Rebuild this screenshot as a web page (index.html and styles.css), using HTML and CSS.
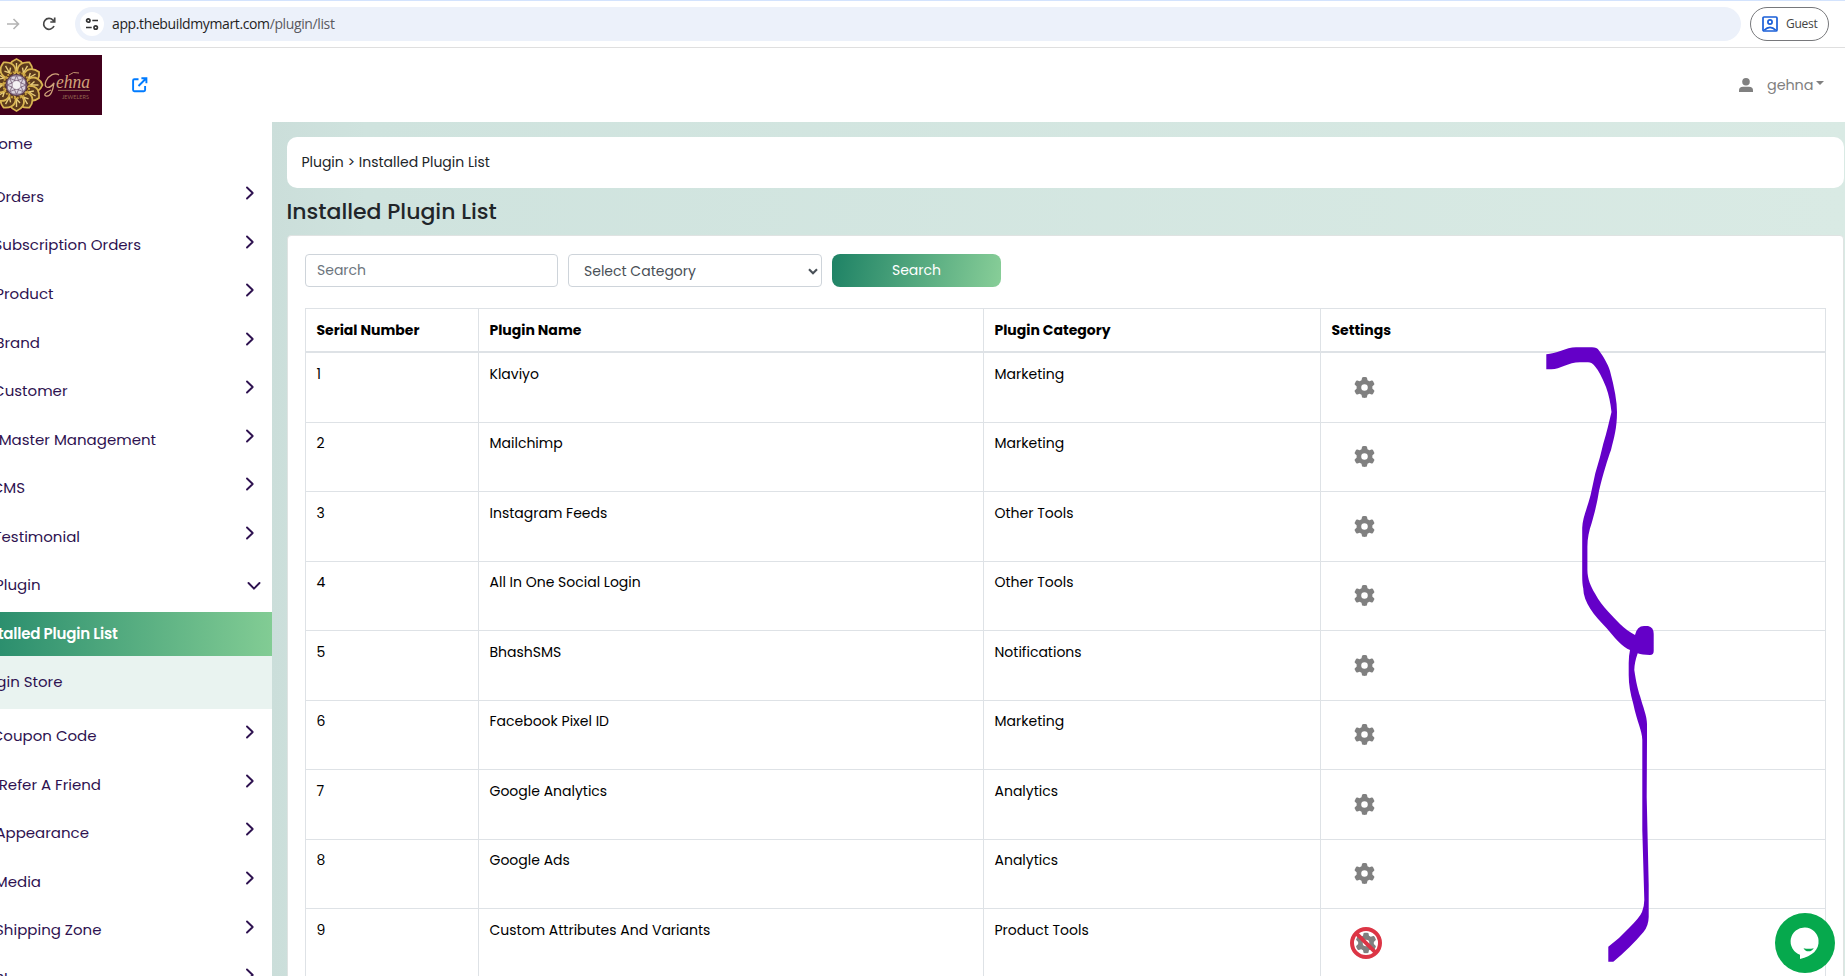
FILE: index.html
```html
<!DOCTYPE html>
<html lang="en">
<head>
<meta charset="utf-8">
<title>Installed Plugin List</title>
<link rel="stylesheet" href="styles.css">
</head>
<body>
<svg width="0" height="0" class="defs">
  <symbol id="chev" viewBox="0 0 10 14"><path d="M2 1.5 7.7 7 2 12.5" fill="none" stroke="#2e1250" stroke-width="1.9" stroke-linecap="round" stroke-linejoin="round"/></symbol>
  <symbol id="gear" viewBox="0 0 512 512"><path fill="#808080" d="M495.9 166.6c3.2 8.7 .5 18.4-6.4 24.6l-43.3 39.4c1.1 8.3 1.7 16.8 1.7 25.4s-.6 17.1-1.7 25.4l43.3 39.4c6.9 6.2 9.6 15.9 6.4 24.6c-4.4 11.9-9.7 23.3-15.8 34.3l-4.7 8.1c-6.6 11-14 21.4-22.1 31.2c-5.9 7.2-15.7 9.6-24.5 6.8l-55.7-17.7c-13.4 10.3-28.2 18.9-44 25.4l-12.5 57.1c-2 9.1-9 16.3-18.2 17.8c-13.8 2.3-28 3.5-42.5 3.5s-28.7-1.2-42.5-3.5c-9.2-1.5-16.2-8.7-18.2-17.8l-12.5-57.1c-15.8-6.5-30.6-15.1-44-25.4L83.1 425.9c-8.8 2.8-18.6 .3-24.5-6.8c-8.1-9.8-15.5-20.2-22.1-31.2l-4.7-8.1c-6.1-11-11.4-22.4-15.8-34.3c-3.2-8.7-.5-18.4 6.4-24.6l43.3-39.4C64.6 273.1 64 264.6 64 256s.6-17.1 1.7-25.4L22.4 191.2c-6.9-6.2-9.6-15.9-6.4-24.6c4.4-11.9 9.7-23.3 15.8-34.3l4.7-8.1c6.6-11 14-21.4 22.1-31.2c5.9-7.2 15.7-9.6 24.5-6.8l55.7 17.7c13.4-10.3 28.2-18.9 44-25.4l12.5-57.1c2-9.1 9-16.3 18.2-17.8C227.3 1.2 241.5 0 256 0s28.7 1.2 42.5 3.5c9.2 1.5 16.2 8.7 18.2 17.8l12.5 57.1c15.8 6.5 30.6 15.1 44 25.4l55.7-17.7c8.8-2.8 18.6-.3 24.5 6.8c8.1 9.8 15.5 20.2 22.1 31.2l4.7 8.1c6.1 11 11.4 22.4 15.8 34.3zM256 336a80 80 0 1 0 0-160 80 80 0 1 0 0 160z"/></symbol>
  <symbol id="petal" viewBox="-30 -30 60 60"><path d="M0-26C5-24 10-19 6-12Q3-9 0-9Q-3-9-6-12C-10-19-5-24 0-26Z" fill="#5c3a1c" stroke="#d9b552" stroke-width="1.8"/><path d="M0-22V-13M-3.5-18 0-14 3.5-18" stroke="#e8cd7a" stroke-width="1.4" fill="none"/></symbol>
</svg>

<div class="toolbar">
  <svg class="forward" width="13" height="12" viewBox="0 0 13 12"><path d="M0 6H11.5M6.5 1 11.5 6 6.5 11" fill="none" stroke="#b4b4b4" stroke-width="1.6"/></svg>
  <svg class="reload" width="14" height="14" viewBox="0 0 14 14"><path d="M12 9A5.4 5.4 0 1 1 11 3.2L12.6 5M12.7.6V5H8.3" fill="none" stroke="#474747" stroke-width="1.7"/></svg>
  <div class="address">
    <span class="site"><svg width="14" height="14" viewBox="0 0 14 14"><g fill="none" stroke="#333" stroke-width="1.7"><circle cx="3.3" cy="3.5" r="1.7"/><path d="M7.3 3.5H13M1 10.5H6.7"/><circle cx="10.7" cy="10.5" r="1.7"/></g></svg></span>
    <span class="url">app.thebuildmymart.com<span class="path">/plugin/list</span></span>
  </div>
  <div class="guest">
    <svg width="16" height="16" viewBox="0 0 16 16"><g fill="none" stroke="#1a5fd8" stroke-width="1.7"><rect x="1" y="1" width="14" height="14" rx="1"/><circle cx="8" cy="6" r="2.1"/><path d="M2.3 14.2Q8 8.6 13.7 14.2"/></g></svg>
    <span>Guest</span>
  </div>
</div>

<header class="header">
  <div class="logo">
    <svg width="102" height="60" viewBox="0 0 102 60">
      <rect width="102" height="60" fill="#42001c"/>
      <g transform="translate(16.5 30)">
        <g id="ring"><use href="#petal" x="-30" y="-30" width="60" height="60"/><use href="#petal" x="-30" y="-30" width="60" height="60" transform="rotate(30)"/><use href="#petal" x="-30" y="-30" width="60" height="60" transform="rotate(60)"/></g>
        <use href="#ring" transform="rotate(90)"/><use href="#ring" transform="rotate(180)"/><use href="#ring" transform="rotate(270)"/>
        <circle r="13" fill="none" stroke="#c79f3c" stroke-width="2" stroke-dasharray="2 1"/>
        <circle r="11" fill="#5b3d52"/><circle r="9.8" fill="#d9d2dc"/>
        <path d="M-4-9 4-9 9-4 9 4 4 9-4 9-9 4-9-4ZM0-9.5 6.7 6.7-9.5 0 6.7-6.7 0 9.5-6.7-6.7 9.5 0-6.7 6.7Z" fill="none" stroke="#776077" stroke-width=".8"/>
        <circle r="4" fill="#f4f1f4"/>
      </g>
      <path d="M58 35.4H90" stroke="#8f6650" stroke-width="1"/>
      <path d="M59 20C55 17 49 20 46 26C43 33 49 35 54 28C53 35 51 42 46 41C43 40 46 37 51 35" fill="none" stroke="#d0a37a" stroke-width="1.3"/>
      <text x="56" y="33" class="logo-name" textLength="34" lengthAdjust="spacingAndGlyphs">ehna</text>
      <path d="M69 20Q73 16 79 18" fill="none" stroke="#c2966f" stroke-width="1"/>
      <text x="62" y="43.5" class="logo-sub" textLength="27" lengthAdjust="spacingAndGlyphs">JEWELERS</text>
    </svg>
  </div>
  <svg class="external" width="16" height="16" viewBox="0 0 16 16"><path d="M6.5 2.2H2.4Q1.1 2.2 1.1 3.5V13Q1.1 14.2 2.4 14.2H11.8Q13.1 14.2 13.1 13V9M6.5 9 14 1.5M9.4 1.2H14.4V6.2" fill="none" stroke="#007bff" stroke-width="1.9"/></svg>
  <div class="user">
    <svg width="14" height="14" viewBox="0 0 14 14"><circle cx="7" cy="3.8" r="3.8" fill="#808080"/><path d="M0 14V12.5Q0 8.8 4 8.8H10Q14 8.8 14 12.5V14Z" fill="#808080"/></svg>
    <span class="user-name">gehna</span><i class="caret"></i>
  </div>
</header>

<div class="layout">
  <nav class="sidebar">
    <div class="home"><span class="label" style="width:32.5px">Home</span></div>
    <div class="item"><span class="label" style="width:44px">Orders</span><svg><use href="#chev"/></svg></div>
    <div class="item"><span class="label" style="width:141px">Subscription Orders</span><svg><use href="#chev"/></svg></div>
    <div class="item"><span class="label" style="width:53.5px">Product</span><svg><use href="#chev"/></svg></div>
    <div class="item"><span class="label" style="width:40px">Brand</span><svg><use href="#chev"/></svg></div>
    <div class="item"><span class="label" style="width:67.5px">Customer</span><svg><use href="#chev"/></svg></div>
    <div class="item"><span class="label" style="width:156px">Master Management</span><svg><use href="#chev"/></svg></div>
    <div class="item"><span class="label" style="width:25px">CMS</span><svg><use href="#chev"/></svg></div>
    <div class="item"><span class="label" style="width:80px">Testimonial</span><svg><use href="#chev"/></svg></div>
    <div class="item open"><span class="label" style="width:40.5px">Plugin</span><svg><use href="#chev"/></svg></div>
    <div class="submenu">
      <div class="sub active"><span class="label" style="width:117.5px">Installed Plugin List</span></div>
      <div class="sub"><span class="label" style="width:62.5px">Plugin Store</span></div>
    </div>
    <div class="item"><span class="label" style="width:96.5px">Coupon Code</span><svg><use href="#chev"/></svg></div>
    <div class="item"><span class="label" style="width:101px">Refer A Friend</span><svg><use href="#chev"/></svg></div>
    <div class="item"><span class="label" style="width:89px">Appearance</span><svg><use href="#chev"/></svg></div>
    <div class="item"><span class="label" style="width:41px">Media</span><svg><use href="#chev"/></svg></div>
    <div class="item"><span class="label" style="width:101.5px">Shipping Zone</span><svg><use href="#chev"/></svg></div>
    <div class="item"><span class="label" style="width:27.5px">Blog</span><svg><use href="#chev"/></svg></div>
  </nav>
  <main class="main">
    <div class="crumbs">Plugin &gt; Installed Plugin List</div>
    <h1 class="title">Installed Plugin List</h1>
    <section class="card">
      <div class="filters">
        <div class="input">Search</div>
        <div class="select"><span>Select Category</span><svg width="10" height="7" viewBox="0 0 10 7"><path d="M1 1.2 5 5.2 9 1.2" fill="none" stroke="#495057" stroke-width="2.1"/></svg></div>
        <button class="btn">Search</button>
      </div>
      <div class="table">
        <div class="row head"><div>Serial Number</div><div>Plugin Name</div><div>Plugin Category</div><div>Settings</div></div>
        <div class="row"><div>1</div><div>Klaviyo</div><div>Marketing</div><div class="cog"><svg><use href="#gear"/></svg></div></div>
        <div class="row"><div>2</div><div>Mailchimp</div><div>Marketing</div><div class="cog"><svg><use href="#gear"/></svg></div></div>
        <div class="row"><div>3</div><div>Instagram Feeds</div><div>Other Tools</div><div class="cog"><svg><use href="#gear"/></svg></div></div>
        <div class="row"><div>4</div><div>All In One Social Login</div><div>Other Tools</div><div class="cog"><svg><use href="#gear"/></svg></div></div>
        <div class="row"><div>5</div><div>BhashSMS</div><div>Notifications</div><div class="cog"><svg><use href="#gear"/></svg></div></div>
        <div class="row"><div>6</div><div>Facebook Pixel ID</div><div>Marketing</div><div class="cog"><svg><use href="#gear"/></svg></div></div>
        <div class="row"><div>7</div><div>Google Analytics</div><div>Analytics</div><div class="cog"><svg><use href="#gear"/></svg></div></div>
        <div class="row"><div>8</div><div>Google Ads</div><div>Analytics</div><div class="cog"><svg><use href="#gear"/></svg></div></div>
        <div class="row"><div>9</div><div>Custom Attributes And Variants</div><div>Product Tools</div><div class="cog banned"><svg viewBox="0 0 32 32"><use href="#gear" x="5.5" y="5.5" width="21" height="21"/><circle cx="16" cy="16" r="14" fill="none" stroke="#dc3545" stroke-width="4"/><path d="M6.3 6.3 25.7 25.7" stroke="#dc3545" stroke-width="4"/></svg></div></div>
      </div>
    </section>
  </main>
</div>

<svg class="ink" width="120" height="630" viewBox="1540 340 120 630"><path fill="#6400c8" d="M1546.3 354.3C1556 354 1566 347.3 1576 347.3H1592Q1597 347.3 1599 350.5C1603 356 1608 364 1610 371Q1617 397 1617 412C1617 428 1614 438 1611 450C1608 458 1603 474 1599 491C1597 504 1594 515 1591.7 523C1589 531 1587.4 538 1587.4 547V570C1587.4 579 1591 587 1595 593.5C1599 601 1603 606 1608.3 611.7C1614 618 1625 630 1635 635Q1637 626 1644 626H1648Q1653.7 627 1653.7 634V651Q1653.7 655 1650 655Q1642 655 1637.7 653.3Q1634.3 663 1634.3 670C1636 682 1638 690 1640 696C1643 707 1647 716 1647 724V740L1646.7 797L1648.7 885V917Q1648.5 926 1643.5 932Q1630 948 1613.3 961.7H1608.3V946.7Q1620 938 1629 928Q1640 917 1642 912Q1644.3 906 1644.3 900L1642.3 830V740C1642 730 1637 722 1633.3 704Q1628.7 688 1628.7 675V663Q1628.7 656 1630 650C1623 648 1613 636 1606.7 628.3C1594 615 1583.5 603 1583.2 588Q1582.2 584 1582.2 576V528C1582.5 518 1587 509 1590.6 495L1595.3 473.3L1600 457L1603.2 444C1607 432 1609 422 1611.5 412Q1610 398 1606 387Q1600 372 1595.3 366.7Q1592 362.3 1588 362.3H1580C1568 362.3 1560 369.5 1551 369.3H1546.3Z"/></svg>

<svg class="chat" width="68" height="68" viewBox="-34 -34 68 68"><circle r="30" fill="#06a94d"/><path d="M-5 16V11.7A14 14 0 1 1 13.5-3C14.5 7 7 13-5 16Z" fill="#fff"/><path d="M-1.5 5.2Q3.5 6.2 8.8 5.2Q7 8.3 3.5 8.3Q0 8.3-1.5 5.2Z" fill="#06a94d"/></svg>
</body>
</html>
```
FILE: styles.css
```css
* { box-sizing: border-box; }
body { margin: 0; width: 1845px; height: 976px; overflow: hidden; position: relative; background: #fff; font-family: Poppins, Inter, "Open Sans", sans-serif; color: #212529; }
.defs { position: absolute; }

.toolbar { height: 48px; border-top: 1px solid #d3e3fd; border-bottom: 1px solid #dfdfdf; display: flex; align-items: center; font-family: "Segoe UI", "Open Sans", sans-serif; }
.forward { margin-left: 7px; }
.reload { margin-left: 22px; }
.address { margin-left: 19px; width: 1666px; height: 34px; border-radius: 17px; background: #ecf1fa; display: flex; align-items: center; gap: 8px; padding-left: 5px; }
.site { width: 24px; height: 24px; border-radius: 12px; background: #fff; display: grid; place-items: center; }
.url { font-size: 14px; color: #1f1f1f; letter-spacing: -.38px; margin-top: -1px; }
.path { color: #5a5a5f; }
.guest { margin-left: 9px; width: 79px; height: 34px; border: 1px solid #77787b; border-radius: 17px; display: flex; align-items: center; gap: 8px; padding-left: 11px; font-size: 12px; letter-spacing: -.25px; color: #444; }
.guest span { margin-top: -1px; }

.header { height: 74px; display: flex; align-items: center; }
.logo { height: 60px; }
.logo svg, .item svg, .cog svg { display: block; }
.logo-name { font: italic 19px "Liberation Serif", serif; fill: #d0a37a; }
.logo-sub { font: 6.5px Lato, sans-serif; fill: #8f6650; }
.external { margin-left: 29.5px; }
.user { margin-left: auto; margin-right: 21px; display: flex; align-items: center; color: #808080; }
.user-name { margin-left: 14px; width: 45px; font-size: 14.4px; letter-spacing: -.1px; white-space: nowrap; }
.caret { margin: -4px 0 0 4px; border: 4px solid transparent; border-top-color: #808080; border-bottom: 0; }

.layout { display: flex; height: 854px; }
.sidebar { width: 272px; flex: none; overflow: hidden; color: #2e1250; font-size: 15px; }
.home { height: 49.7px; display: flex; align-items: center; }
.home .label { margin-top: -6px; }
.label { display: flex; flex: none; justify-content: flex-end; white-space: nowrap; }
.item { height: 48.55px; display: flex; align-items: center; justify-content: space-between; padding-right: 17.5px; }
.item .label { margin-top: .8px; }
.item svg { width: 10px; height: 14px; margin-top: -6px; }
.item.open svg { transform: rotate(90deg); margin: 4px -4px 0 0; }
.submenu { margin: 3px 0 2.5px; height: 97px; background: #e9f3f0; }
.sub { height: 52px; display: flex; align-items: center; }
.sub.active { height: 44px; color: #fff; font-weight: 600; font-size: 15px; letter-spacing: -.2px; background: linear-gradient(90deg, #2c8f6e, #82cc94); }

.main { flex: 1; min-width: 0; padding: 15px 1px 0 15px; background: linear-gradient(90deg, #cbdeda, #cfe3de 6%, #d9eae4); }
.crumbs { height: 51px; border-radius: 10px; background: #fff; display: flex; align-items: center; padding: 0 14.4px; font-size: 14px; }
.title { margin: 8px 0 7px; height: 32px; line-height: 32px; font-size: 22px; font-weight: 500; text-indent: -.5px; }
.card { height: 760px; background: #fff; border: 1px solid #dfe3e2; border-radius: 4px; padding: 18px 17px 0 17px; }
.filters { display: flex; font-size: 14px; }
.input, .select { height: 33px; width: 253px; border: 1px solid #ced4da; border-radius: 4px; padding: 0 11px; display: flex; align-items: center; color: #6c757d; }
.select { width: 254px; margin: 0 10px; padding: 1px 3px 0 15px; justify-content: space-between; color: #495057; }
.btn { width: 169px; height: 33px; border: 0; border-radius: 8px; color: #fff; font: 14px Poppins, Inter, sans-serif; padding: 0; background: linear-gradient(100deg, #1e8265, #88ce98); }
.table { margin-top: 21px; border: 1px solid #dee2e6; border-bottom: 0; color: #000; font-size: 14px; }
.row { display: grid; grid-template-columns: 172px 505px 337px 1fr; height: 69.5px; border-bottom: 1px solid #dee2e6; }
.row > div { padding: 10.8px 10px 0 10.5px; }
.row > div + div { border-left: 1px solid #dee2e6; padding-left: 10.5px; }
.row > .cog { padding: 23.5px 0 0 32.5px; }
.row > .cog.banned { padding: 18px 0 0 29px; }
.cog svg { width: 21px; height: 21px; }
.banned svg { width: 32px; height: 32px; }
.row.head { height: 44px; border-bottom-width: 2px; font-weight: 700; }
.row.head > div { padding-top: 11px; }

.ink { position: absolute; left: 1540.4px; top: 340.4px; }
.chat { position: absolute; left: 1771px; top: 909px; }
```
